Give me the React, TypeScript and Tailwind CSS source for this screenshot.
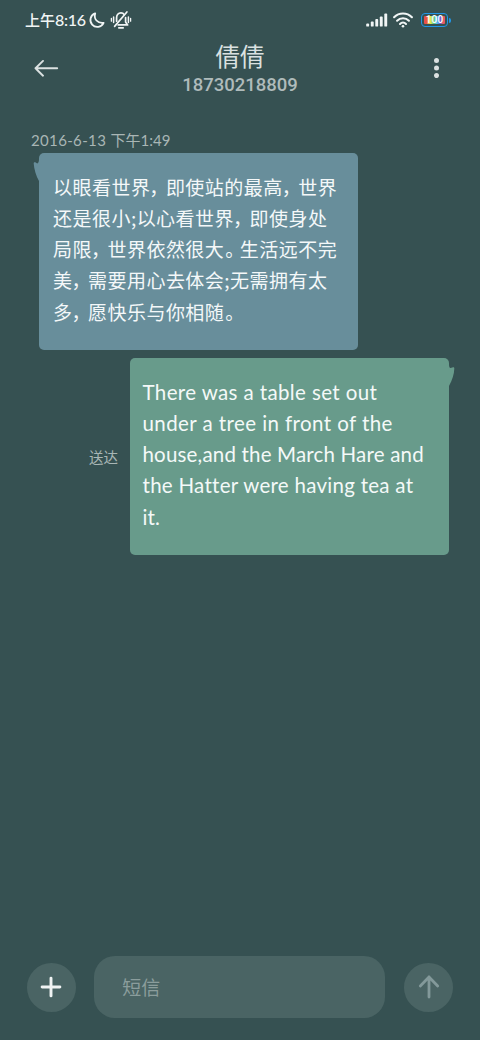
import { Fragment } from "react";

const SIGNAL_BARS = [
    { x: 1, height: 3 },
    { x: 5.6, height: 5 },
    { x: 10.1, height: 7.5 },
    { x: 14.6, height: 10 },
    { x: 19.1, height: 13 },
];

const RECEIVED_LINES = [
    "以眼看世界，即使站的最高，世界",
    "还是很小;以心看世界，即使身处",
    "局限，世界依然很大。生活远不完",
    "美，需要用心去体会;无需拥有太",
    "多，愿快乐与你相随。",
];

const SENT_LINES = [
    { text: "There was a table set out", tracking: "tracking-[0.38px]" },
    { text: "under a tree in front of the", tracking: "tracking-[0.42px]" },
    { text: "house,and the March Hare and", tracking: "tracking-[0.18px]" },
    { text: "the Hatter were having tea at", tracking: "tracking-[0.28px]" },
    { text: "it.", tracking: "tracking-[0.1px]" },
];

function StatusBar() {
    return (
        <div className="flex h-10 items-center pl-[25px] pr-[29px] text-[#f1f5f5]">
            <span className="w-[61px] whitespace-nowrap text-[15px] font-medium leading-5">
                上午<span className="font-['Lato',sans-serif] text-[16px] font-medium tracking-[-0.3px]">8:16</span>
            </span>

            {/* おやすみモード */}
            <svg className="ml-[2px] h-[18px] w-[18px]" viewBox="0 0 18 18" fill="none" stroke="currentColor" strokeWidth="1.8" strokeLinejoin="round">
                <path d="M7.2 2.4A6.9 6.9 0 1 0 15.6 11.8C9.6 12.6 5.4 8 7.2 2.4Z" />
            </svg>

            {/* 通知オフ */}
            <svg className="ml-[4px] h-[20px] w-[22px]" viewBox="0 0 22 20" fill="none" stroke="currentColor" strokeWidth="1.7" strokeLinecap="round" strokeLinejoin="round">
                <path d="M14.2 4.6C13.5 3.5 12.4 2.9 11 2.9C8.2 2.9 6.6 5 6.6 7.8V11.2M8.2 14.9H17.6L15.6 12V7.6" />
                <path d="M4.6 16.4L16.9 2" />
                <path d="M8.8 17.8H13.2" strokeWidth="1.7" />
                <path d="M3.6 7V12.4M18.4 7V12.4" strokeWidth="1.5" />
                <path d="M1.4 8.3V11.2M20.6 8.3V11.2" strokeWidth="1.3" />
            </svg>

            <svg className="ml-auto h-[14px] w-[22px]" viewBox="0 0 22 14" fill="currentColor">
                {SIGNAL_BARS.map((bar) => (
                    <rect key={bar.x} x={bar.x - 0.8} y={13.6 - bar.height} width="2.9" height={bar.height} rx="0.9" />
                ))}
            </svg>

            <svg className="ml-[5px] h-[16px] w-[20px]" viewBox="0 0 20 16" fill="none" stroke="currentColor" strokeWidth="2.1" strokeLinecap="round">
                <path d="M1.1 5.2C6 .3 14 .3 18.9 5.2" />
                <path d="M4.1 8.7C7.3 5.5 12.7 5.5 15.9 8.7" />
                <path d="M7 11.9C8.7 10.2 11.3 10.2 13 11.9" />
                <circle cx="10" cy="14.2" r="1.3" fill="currentColor" stroke="none" />
            </svg>

            {/* バッテリー */}
            <div className="ml-[8px] flex items-center">
                <div className="flex h-[14px] w-[27px] rounded-[4px] border-[1.5px] border-[#2196e8] p-[2px]">
                    <div className="flex w-full items-center justify-center rounded-[1px] bg-[linear-gradient(90deg,#e8504a_0_12%,#eebb63_20%,#dbe94e_32%,#5fc886_46%,#59c8e8_60%,#5b62e8_76%,#e95a62_90%)]">
                        <span className="font-['Roboto',sans-serif] text-[10px] font-medium leading-none tracking-[0.2px] text-white">
                            100
                        </span>
                    </div>
                </div>
                <div className="ml-px h-[5px] w-[2px] rounded-r-sm bg-[#2196e8]" />
            </div>
        </div>
    );
}

function Header() {
    return (
        <div className="flex h-[60px] items-start pl-[34px] text-[#dbe1e1]">
            <svg className="mt-[19px] h-[18px] w-[25px] shrink-0" viewBox="0 0 25 18" fill="none" stroke="currentColor" strokeWidth="1.9" strokeLinecap="round" strokeLinejoin="round">
                <path d="M23.2 9.3H1.5M9 1.9L1.5 9.3L9 16.7" />
            </svg>
            <div className="ml-[81px] flex w-[200px] flex-col items-center">
                <span className="text-[24.5px] leading-[32px]">倩倩</span>
                <span className="mt-[2px] font-['Roboto','Noto_Sans_CJK_SC',sans-serif] text-[18.5px] font-medium leading-[22px] text-[#afbbbb]">
                    18730218809
                </span>
            </div>
            <svg className="ml-[93px] mt-[18px] h-[20px] w-[7px]" viewBox="0 0 7 20" fill="currentColor">
                <circle cx="3.5" cy="2.6" r="2.5" />
                <circle cx="3.5" cy="10.1" r="2.5" />
                <circle cx="3.5" cy="17.6" r="2.5" />
            </svg>
        </div>
    );
}

// 全角の句読点だけ字幅を詰めて表示する
function CompactLine({ text }: { text: string }) {
    return (
        <div className="whitespace-nowrap">
            {text.split(/([，。])/).map((part, i) => {
                if (part === "，") {
                    return (
                        <span key={i} className="-ml-px mr-px tracking-[-3.5px]">
                            {part}
                        </span>
                    );
                }
                if (part === "。") {
                    return (
                        <span key={i} className="ml-px -mr-px tracking-[-3.5px]">
                            {part}
                        </span>
                    );
                }
                return <Fragment key={i}>{part}</Fragment>;
            })}
        </div>
    );
}

function ReceivedMessage() {
    return (
        <div className="relative ml-[38.5px] h-[197px] w-[319px] rounded-[5px] bg-[#688e9b] pl-[14.5px] pt-[18.5px] text-[19px] leading-[31.1px] tracking-[0.47px] text-[#f4f8f9]">
            <svg className="absolute -left-[6px] top-[4px] h-[26px] w-[10px]" viewBox="0 0 10 26" fill="#688e9b">
                <path d="M6 24C3.2 19 1 12 .7 6.5C.7 4.6 2.2 5 4.2 6.4C5.5 6 6 4.5 6 2H10V24Z" />
            </svg>
            {RECEIVED_LINES.map((line) => (
                <CompactLine key={line} text={line} />
            ))}
        </div>
    );
}

function SentMessage() {
    return (
        <div className="mt-[8.5px] flex items-center pl-[89px]">
            <span className="w-[41px] text-[14.5px] leading-5 text-[#a9b6b5]">送达</span>
            <div className="relative h-[197px] w-[319px] rounded-[5px] bg-[#689b8b] pl-[12.5px] pt-[19px] font-['Lato','Noto_Sans_CJK_SC',sans-serif] text-[20.5px] leading-[31.1px] text-[#f4f9f8]">
                <svg className="absolute -right-[6px] top-[4px] h-[26px] w-[10px]" viewBox="0 0 10 26" fill="#689b8b">
                    <path d="M4 24C7.3 18 9.2 12 9.3 6.5C9.3 4.6 7.6 5.2 5.7 6.1C4.6 6.3 4 5 4 2H0V24Z" />
                </svg>
                {SENT_LINES.map((line) => (
                    <div key={line.text} className={`whitespace-nowrap ${line.tracking}`}>
                        {line.text}
                    </div>
                ))}
            </div>
        </div>
    );
}

function Composer() {
    return (
        <div className="mt-auto flex items-center justify-between pb-[22px] pl-[26.5px] pr-[27px]">
            <button className="flex h-[49px] w-[49px] items-center justify-center rounded-full bg-[#4a6464] text-[#f0f3f3]">
                <svg className="h-[22px] w-[22px]" viewBox="0 0 22 22" stroke="currentColor" strokeWidth="2.9" strokeLinecap="round">
                    <path d="M11 2.1V19.9M2.1 11H19.9" />
                </svg>
            </button>
            <div className="flex h-[62px] w-[291px] items-center rounded-[21px] bg-[#4a6464] pl-[28px] text-[19px] text-[#8b9d9c]">
                短信
            </div>
            <button className="flex h-[49px] w-[49px] items-center justify-center rounded-full bg-[#4a6464] text-[#83999a]">
                <svg className="h-[24px] w-[22px]" viewBox="0 0 22 24" fill="none" stroke="currentColor" strokeWidth="2.8" strokeLinecap="round" strokeLinejoin="round">
                    <path d="M11 22V2M2.3 11L11 2L19.7 11" />
                </svg>
            </button>
        </div>
    );
}

export default function App() {
    return (
        <div className="flex h-[1040px] w-[480px] flex-col overflow-hidden bg-[#365152] font-['Noto_Sans_CJK_SC',sans-serif]">
            <StatusBar />
            <Header />
            <div className="mt-[30px] pl-[31px] text-[15px] leading-[20px] text-[#a9b6b5]">
                <span className="font-['Lato',sans-serif] tracking-[0.35px]">2016-6-13 </span>
                下午
                <span className="font-['Lato',sans-serif] tracking-[0.1px]">1:49</span>
            </div>
            <div className="mt-[2.7px]">
                <ReceivedMessage />
                <SentMessage />
            </div>
            <Composer />
        </div>
    );
}
